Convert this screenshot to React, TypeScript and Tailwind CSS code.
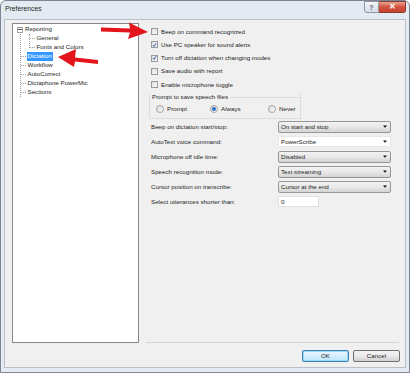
import React from "react";

const checks = [
  { label: "Beep on command recognized", on: false },
  { label: "Use PC speaker for sound alerts", on: true },
  { label: "Turn off dictation when changing modes", on: true },
  { label: "Save audio with report", on: false },
  { label: "Enable microphone toggle", on: false },
];

const rows = [
  { label: "Beep on dictation start/stop:", value: "On start and stop", kind: "drop" },
  { label: "AutoText voice command:", value: "PowerScribe", kind: "edit" },
  { label: "Microphone off idle time:", value: "Disabled", kind: "drop" },
  { label: "Speech recognition mode:", value: "Text streaming", kind: "drop" },
  { label: "Cursor position on transcribe:", value: "Cursor at the end", kind: "drop" },
  { label: "Select utterances shorter than:", value: "0", kind: "text" },
];

const Check = ({ on }: { on: boolean }) => (
  <div className="flex h-[7px] w-[7px] items-center justify-center border border-[#9a9a9a] bg-gradient-to-br from-[#dedede] to-[#fbfbfb]">
    {on && (
      <svg width="6" height="6" viewBox="0 0 6 6">
        <path d="M1 3 L2.5 4.8 L5 0.8" stroke="#2a5aa8" strokeWidth="1.1" fill="none" />
      </svg>
    )}
  </div>
);

const Radio = ({ on }: { on: boolean }) => (
  <div className="flex h-[8px] w-[8px] items-center justify-center rounded-full border border-[#a5a5a5] bg-gradient-to-br from-[#dcdcdc] to-[#fafafa]">
    {on && <div className="h-[4px] w-[4px] rounded-full bg-[#2a6fc9]" />}
  </div>
);

const Arrow = () => (
  <svg width="8" height="5" viewBox="0 0 8 5" className="shrink-0">
    <path d="M2 1.5 L6 1.5 L4 3.8 Z" fill="#111" />
  </svg>
);

const Field = ({ kind, value }: { kind: string; value: string }) => {
  if (kind === "text")
    return (
      <div className="flex h-[11px] w-[41px] items-center border border-[#dde1e6] bg-white pl-[2px]">{value}</div>
    );
  if (kind === "edit")
    return (
      <div className="flex h-[11px] w-[113px] items-center justify-between border border-[#e6e8eb] bg-white pl-[2px] pr-[1px]">
        <span>{value}</span>
        <Arrow />
      </div>
    );
  return (
    <div className="flex h-[12px] w-[113px] items-center justify-between rounded-[2px] border border-[#979797] bg-gradient-to-b from-[#f3f3f3] via-[#e8e8e8] to-[#d4d4d4] pl-[2px] pr-[1px]">
      <span>{value}</span>
      <Arrow />
    </div>
  );
};

const TreeItem = ({ text, selected }: { text: string; selected?: boolean }) => (
  <div className="flex h-[9px] items-center">
    <div className="mr-[1px] w-[5px] border-t border-dotted border-[#a0a0a0]" />
    <span className={selected ? "bg-[#3399ff] px-[1px] py-[1px] text-white" : "px-[1px]"}>{text}</span>
  </div>
);

export default function App() {
  return (
    <div className="relative flex h-[373px] w-[410px] flex-col overflow-hidden rounded-t-[6px] border border-[#7c8591] bg-[#e4eaf1] font-['Liberation_Sans',sans-serif] text-[6.2px] leading-none text-[#1e1e1e]">
      {/* Title bar */}
      <div className="flex h-[18px] items-start justify-between pl-[4px] pr-[3px]">
        <span className="mt-[5px] text-[6.8px]">Preferences</span>
        <div className="flex">
          <div className="flex h-[12px] w-[15px] items-center justify-center rounded-bl-[3px] border border-[#8d97a3] bg-gradient-to-b from-[#f4f6f9] to-[#d7dde5] text-[7px] font-bold text-[#5b6470]">
            ?
          </div>
          <div className="flex h-[12px] w-[27px] items-center justify-center rounded-br-[3px] border border-l-0 border-[#8b3a30] bg-gradient-to-b from-[#e8a293] via-[#d2533f] to-[#c8422c] text-[8px] font-bold text-white">
            ✕
          </div>
        </div>
      </div>

      {/* Client area */}
      <div className="mx-[3px] mb-[4px] flex flex-1 flex-col border border-[#b9c0c9] bg-[#f0f0f0]">
        <div className="flex pl-[7px] pt-[3px]">
          {/* Tree */}
          <div className="h-[320px] w-[127px] border border-[#828790] bg-white pl-[4px] pt-[1px]">
            <div className="flex h-[9px] items-center">
              <div className="flex h-[6px] w-[6px] items-center justify-center border border-[#a0a0a0] bg-white">
                <div className="h-px w-[4px] bg-[#555]" />
              </div>
              <span className="ml-[2px]">Reporting</span>
            </div>
            <div className="ml-[2.5px] flex">
              <div className="border-l border-dotted border-[#a0a0a0]" />
              <div className="flex flex-col">
                <div className="ml-[8px] flex">
                  <div className="mb-[4px] border-l border-dotted border-[#a0a0a0]" />
                  <div className="flex flex-col">
                    <TreeItem text="General" />
                    <TreeItem text="Fonts and Colors" />
                  </div>
                </div>
                <TreeItem text="Dictation" selected />
                <TreeItem text="Workflow" />
                <TreeItem text="AutoCorrect" />
                <TreeItem text="Dictaphone PowerMic" />
                <div className="flex h-[9px] items-center">
                  <div className="mr-[1px] w-[5px] border-t border-dotted border-[#a0a0a0]" />
                  <span className="px-[1px]">Sections</span>
                </div>
              </div>
            </div>
          </div>

          {/* Settings */}
          <div className="flex flex-1 flex-col pl-[7px]">
            <div className="flex flex-col pl-[5px] pt-[2px]">
              {checks.map((c) => (
                <div key={c.label} className="flex h-[13.25px] items-center gap-[3px]">
                  <Check on={c.on} />
                  <span>{c.label}</span>
                </div>
              ))}
            </div>

            <div className="ml-[3px] mt-[3px] w-[152px] border border-t-0 border-[#dcdcdc] pb-[5px]">
              <div className="flex items-center">
                <span className="pl-[2px] pr-[2px]">Prompt to save speech files</span>
                <div className="flex-1 border-t border-[#dcdcdc]" />
              </div>
              <div className="mt-[5px] flex items-center pl-[6px]">
                <div className="flex w-[54px] items-center gap-[3px]">
                  <Radio on={false} />
                  <span>Prompt</span>
                </div>
                <div className="flex w-[58px] items-center gap-[3px]">
                  <Radio on />
                  <span>Always</span>
                </div>
                <div className="flex items-center gap-[3px]">
                  <Radio on={false} />
                  <span>Never</span>
                </div>
              </div>
            </div>

            <div className="flex w-[245px] flex-col pl-[5px]">
              {rows.map((r) => (
                <div key={r.label} className="flex h-[15px] items-center justify-between">
                  <span>{r.label}</span>
                  <div className="w-[113px]">
                    <Field kind={r.kind} value={r.value} />
                  </div>
                </div>
              ))}
            </div>

            <div className="flex-1" />
            <div className="mr-[6px] border-b border-[#d5d5d5]" />
          </div>
        </div>

        {/* Buttons */}
        <div className="flex justify-end gap-[4px] pr-[5px] pt-[7px]">
          <div className="flex h-[12px] w-[47px] items-center justify-center rounded-[2px] border border-[#3c7fb1] bg-gradient-to-b from-[#eaf6fd] to-[#bee6fd] shadow-[inset_0_0_0_1px_#9ad9fa]">
            OK
          </div>
          <div className="flex h-[12px] w-[47px] items-center justify-center rounded-[2px] border border-[#707070] bg-gradient-to-b from-[#f2f2f2] via-[#ebebeb] to-[#cfcfcf]">
            Cancel
          </div>
        </div>
      </div>

      {/* Annotation arrows */}
      <svg className="pointer-events-none absolute left-0 top-0" width="410" height="373">
        <polygon points="100,26.5 129,27.6 128,21.5 147,31 127,38 129,31.6 100,30.5" fill="#e3141b" />
        <polygon points="97,59 74,56.4 75,48 57,56 73,66 74,60.5 97,63" fill="#e3141b" />
      </svg>
    </div>
  );
}
